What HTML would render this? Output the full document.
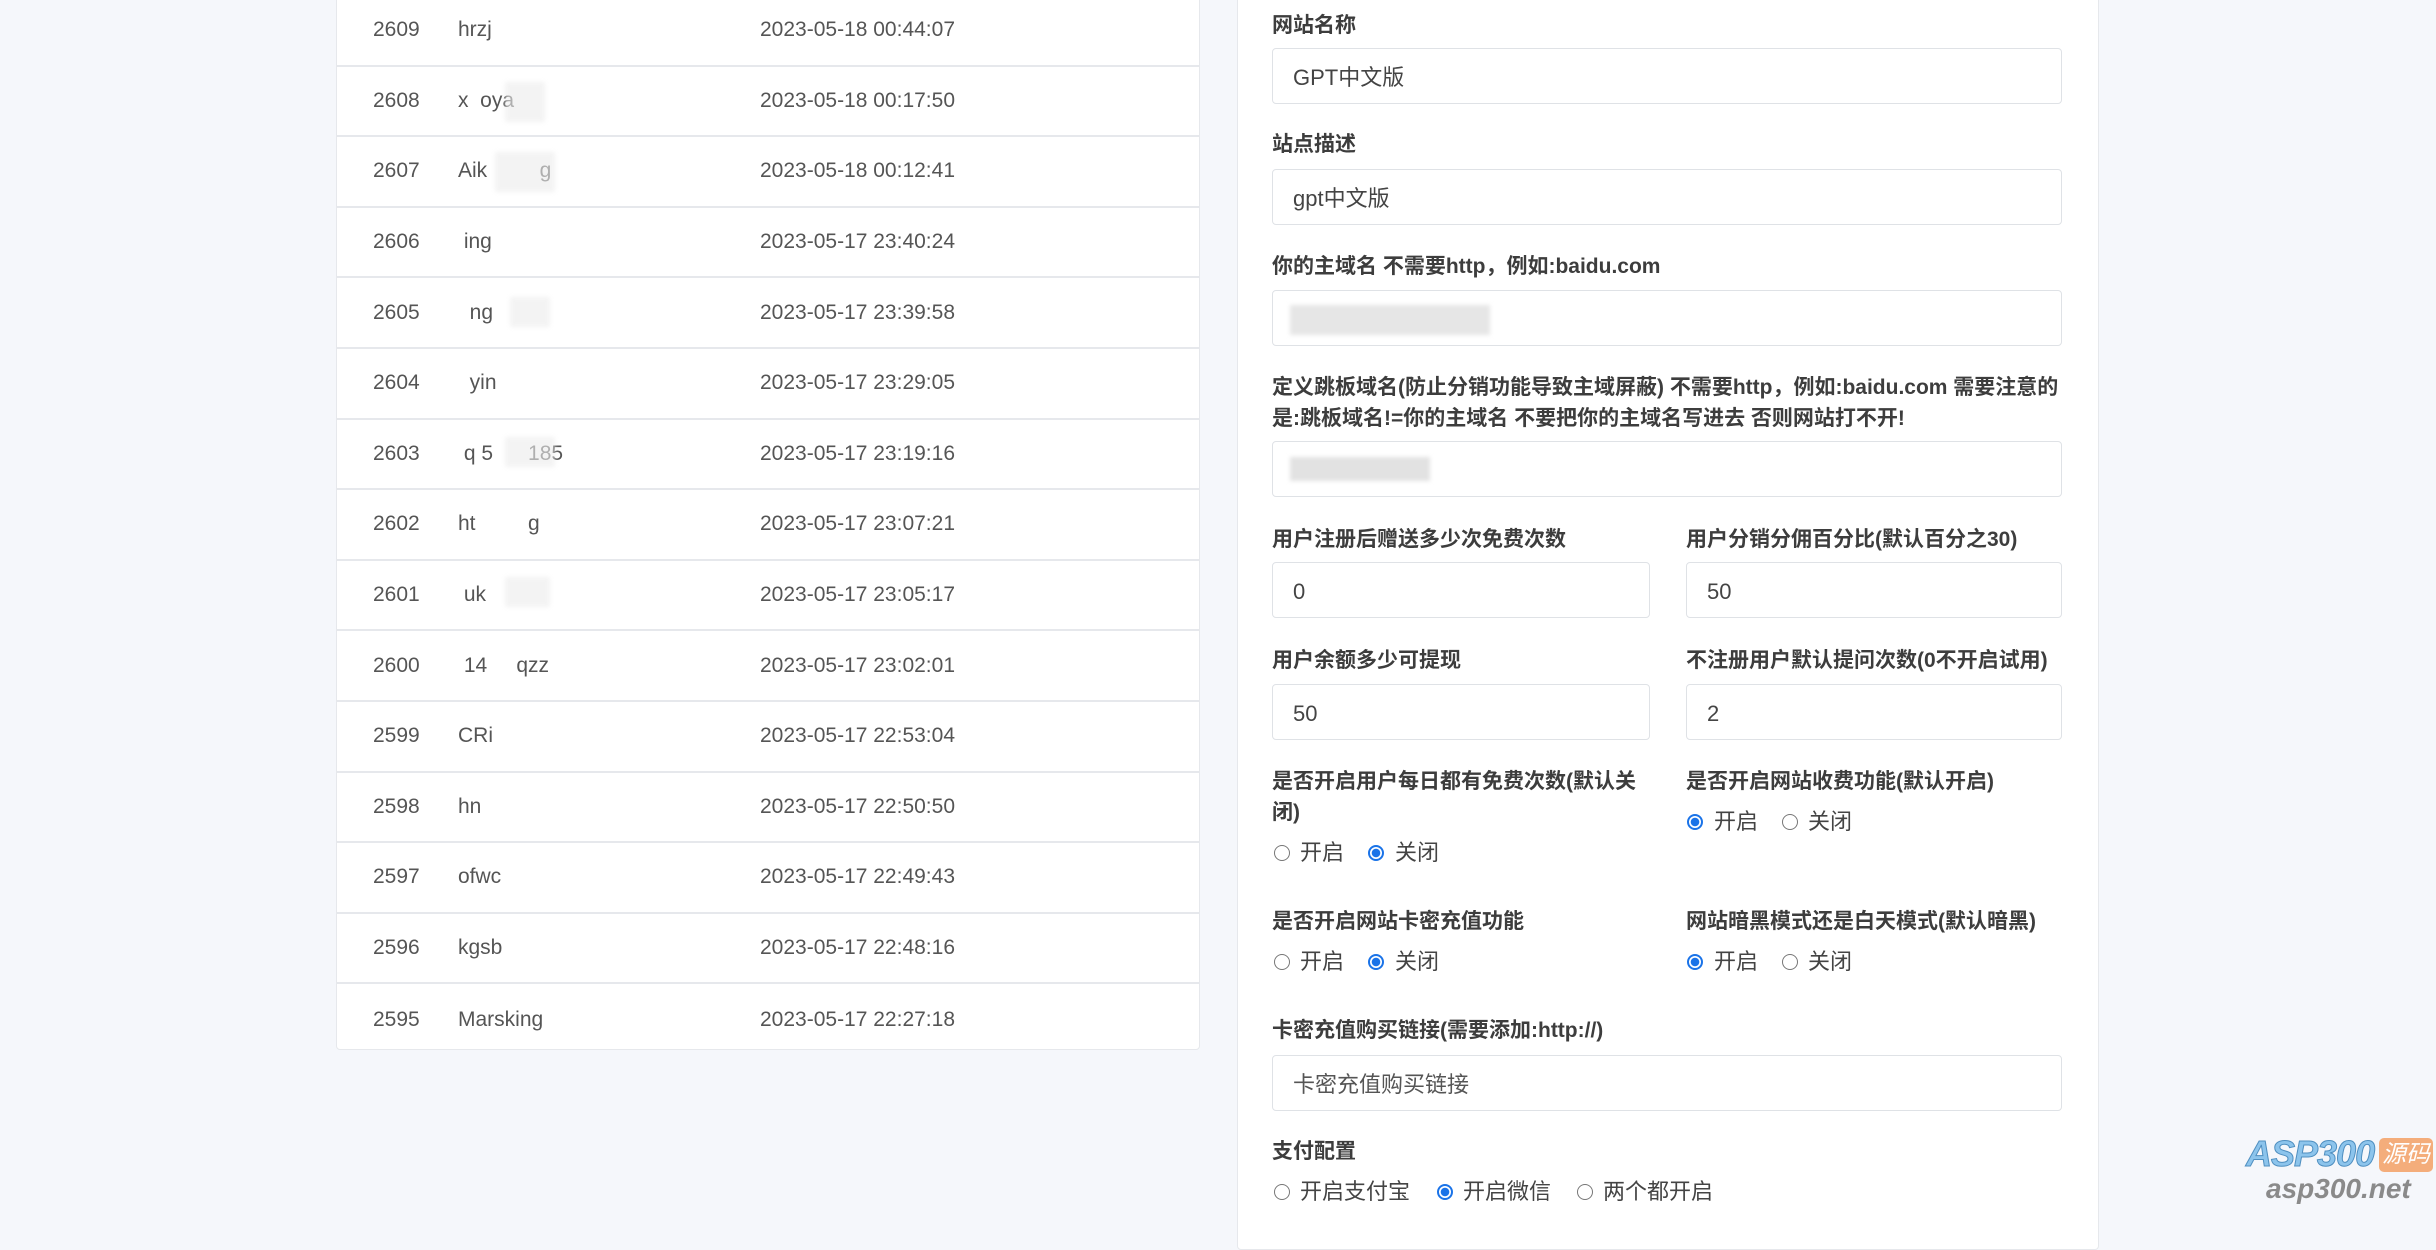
<!DOCTYPE html>
<html><head><meta charset="utf-8">
<style>
*{margin:0;padding:0;box-sizing:border-box}
body{width:2436px;height:1213px;background:#f5f7fb;position:relative;overflow:hidden;font-family:"Liberation Sans","Noto Sans CJK SC",sans-serif;color:#444}
.card{position:absolute;background:#fff;border:1px solid #e6e8ec;border-radius:4px}
.row{position:absolute;left:0;right:0;height:70.6px;border-bottom:2px solid #e6e8ec;font-size:21px;color:#555}
.row span{position:absolute;top:50%;transform:translateY(-50%);white-space:nowrap}
.blur{position:absolute;background:#ececec;filter:blur(2px)}
.lbl{position:absolute;left:1272px;font-size:21px;font-weight:bold;color:#3d3d3d;white-space:nowrap;line-height:31px}
.inp{position:absolute;height:56px;border:1px solid #dfe2e6;border-radius:4px;background:#fff;font-size:22px;color:#444;padding-left:20px;line-height:58px}
.rd{position:absolute;width:16px;height:16px;border:1.5px solid #777;border-radius:50%;background:#fff}
.rd.on{border:2px solid #1a73e8;background:radial-gradient(circle,#1a73e8 0 4px,#fff 4.5px)}
.rt{position:absolute;font-size:22px;color:#444;line-height:30px;white-space:nowrap}
</style></head><body>
<div class="card" style="left:336px;top:-10px;width:864px;height:1060px;"></div>
<div style="position:absolute;left:336px;top:-4px;width:864px;">
<div class="row" style="top:0"><span style="left:37px">2609</span><span style="left:122px">hrzj</span><span style="left:424px">2023-05-18 00:44:07</span></div>
<div class="row" style="top:70.6px"><span style="left:37px">2608</span><span style="left:122px">x&nbsp;&nbsp;oya</span><span style="left:424px">2023-05-18 00:17:50</span></div>
<div class="row" style="top:141.2px"><span style="left:37px">2607</span><span style="left:122px">Aik&nbsp;&nbsp;&nbsp;&nbsp;&nbsp;&nbsp;&nbsp;&nbsp;&nbsp;g</span><span style="left:424px">2023-05-18 00:12:41</span></div>
<div class="row" style="top:211.8px"><span style="left:37px">2606</span><span style="left:122px">&nbsp;ing</span><span style="left:424px">2023-05-17 23:40:24</span></div>
<div class="row" style="top:282.4px"><span style="left:37px">2605</span><span style="left:122px">&nbsp;&nbsp;ng</span><span style="left:424px">2023-05-17 23:39:58</span></div>
<div class="row" style="top:353px"><span style="left:37px">2604</span><span style="left:122px">&nbsp;&nbsp;yin</span><span style="left:424px">2023-05-17 23:29:05</span></div>
<div class="row" style="top:423.6px"><span style="left:37px">2603</span><span style="left:122px">&nbsp;q&nbsp;5&nbsp;&nbsp;&nbsp;&nbsp;&nbsp;&nbsp;185</span><span style="left:424px">2023-05-17 23:19:16</span></div>
<div class="row" style="top:494.2px"><span style="left:37px">2602</span><span style="left:122px">ht&nbsp;&nbsp;&nbsp;&nbsp;&nbsp;&nbsp;&nbsp;&nbsp;&nbsp;g</span><span style="left:424px">2023-05-17 23:07:21</span></div>
<div class="row" style="top:564.8px"><span style="left:37px">2601</span><span style="left:122px">&nbsp;uk</span><span style="left:424px">2023-05-17 23:05:17</span></div>
<div class="row" style="top:635.4px"><span style="left:37px">2600</span><span style="left:122px">&nbsp;14&nbsp;&nbsp;&nbsp;&nbsp;&nbsp;qzz</span><span style="left:424px">2023-05-17 23:02:01</span></div>
<div class="row" style="top:706px"><span style="left:37px">2599</span><span style="left:122px">CRi</span><span style="left:424px">2023-05-17 22:53:04</span></div>
<div class="row" style="top:776.6px"><span style="left:37px">2598</span><span style="left:122px">hn</span><span style="left:424px">2023-05-17 22:50:50</span></div>
<div class="row" style="top:847.2px"><span style="left:37px">2597</span><span style="left:122px">ofwc</span><span style="left:424px">2023-05-17 22:49:43</span></div>
<div class="row" style="top:917.8px"><span style="left:37px">2596</span><span style="left:122px">kgsb</span><span style="left:424px">2023-05-17 22:48:16</span></div>
<div class="row" style="top:988.4px;border-bottom:none"><span style="left:37px">2595</span><span style="left:122px">Marsking</span><span style="left:424px">2023-05-17 22:27:18</span></div>
</div>
<div class="blur" style="left:505px;top:82px;width:40px;height:40px;opacity:.6"></div>
<div class="blur" style="left:495px;top:152px;width:60px;height:40px;opacity:.6"></div>
<div class="blur" style="left:510px;top:297px;width:40px;height:30px;opacity:.6"></div>
<div class="blur" style="left:505px;top:437px;width:50px;height:30px;opacity:.6"></div>
<div class="blur" style="left:505px;top:577px;width:45px;height:30px;opacity:.6"></div>

<div class="card" style="left:1237px;top:-10px;width:862px;height:1260px;"></div>

<div class="lbl" style="top:10px">网站名称</div>
<div class="inp" style="left:1272px;top:48px;width:790px">GPT中文版</div>
<div class="lbl" style="top:129px">站点描述</div>
<div class="inp" style="left:1272px;top:169px;width:790px">gpt中文版</div>
<div class="lbl" style="top:251px">你的主域名 不需要http，例如:baidu.com</div>
<div class="inp" style="left:1272px;top:290px;width:790px"></div>
<div class="blur" style="left:1290px;top:305px;width:200px;height:30px;background:#e6e6e6"></div>
<div class="lbl" style="top:372px">定义跳板域名(防止分销功能导致主域屏蔽) 不需要http，例如:baidu.com 需要注意的</div>
<div class="lbl" style="top:403px">是:跳板域名!=你的主域名 不要把你的主域名写进去 否则网站打不开!</div>
<div class="inp" style="left:1272px;top:441px;width:790px"></div>
<div class="blur" style="left:1290px;top:457px;width:140px;height:24px;background:#e2e2e2"></div>

<div class="lbl" style="top:524px">用户注册后赠送多少次免费次数</div>
<div class="lbl" style="top:524px;left:1686px">用户分销分佣百分比(默认百分之30)</div>
<div class="inp" style="left:1272px;top:562px;width:378px">0</div>
<div class="inp" style="left:1686px;top:562px;width:376px">50</div>
<div class="lbl" style="top:645px">用户余额多少可提现</div>
<div class="lbl" style="top:645px;left:1686px">不注册用户默认提问次数(0不开启试用)</div>
<div class="inp" style="left:1272px;top:684px;width:378px">50</div>
<div class="inp" style="left:1686px;top:684px;width:376px">2</div>

<div class="lbl" style="top:766px">是否开启用户每日都有免费次数(默认关</div>
<div class="lbl" style="top:797px">闭)</div>
<div class="lbl" style="top:766px;left:1686px">是否开启网站收费功能(默认开启)</div>
<div class="rd" style="left:1274px;top:845px"></div><div class="rt" style="left:1300px;top:838px">开启</div>
<div class="rd on" style="left:1368px;top:845px"></div><div class="rt" style="left:1395px;top:838px">关闭</div>
<div class="rd on" style="left:1687px;top:814px"></div><div class="rt" style="left:1714px;top:807px">开启</div>
<div class="rd" style="left:1782px;top:814px"></div><div class="rt" style="left:1808px;top:807px">关闭</div>

<div class="lbl" style="top:906px">是否开启网站卡密充值功能</div>
<div class="lbl" style="top:906px;left:1686px">网站暗黑模式还是白天模式(默认暗黑)</div>
<div class="rd" style="left:1274px;top:954px"></div><div class="rt" style="left:1300px;top:947px">开启</div>
<div class="rd on" style="left:1368px;top:954px"></div><div class="rt" style="left:1395px;top:947px">关闭</div>
<div class="rd on" style="left:1687px;top:954px"></div><div class="rt" style="left:1714px;top:947px">开启</div>
<div class="rd" style="left:1782px;top:954px"></div><div class="rt" style="left:1808px;top:947px">关闭</div>

<div class="lbl" style="top:1015px">卡密充值购买链接(需要添加:http://)</div>
<div class="inp" style="left:1272px;top:1055px;width:790px;color:#555">卡密充值购买链接</div>
<div class="lbl" style="top:1136px">支付配置</div>
<div class="rd" style="left:1274px;top:1184px"></div><div class="rt" style="left:1300px;top:1177px">开启支付宝</div>
<div class="rd on" style="left:1437px;top:1184px"></div><div class="rt" style="left:1463px;top:1177px">开启微信</div>
<div class="rd" style="left:1577px;top:1184px"></div><div class="rt" style="left:1603px;top:1177px">两个都开启</div>

<div style="position:absolute;left:2246px;top:1134px;font-size:36px;font-weight:bold;font-style:italic;color:#8cc4ec;-webkit-text-stroke:1px #4f8fc0;letter-spacing:-1px;line-height:40px">ASP300</div>
<div style="position:absolute;left:2379px;top:1138px;width:54px;height:34px;background:#f4ad7b;border-radius:5px;color:#fff;font-size:24px;font-style:italic;text-align:center;line-height:34px">源码</div>
<div style="position:absolute;left:2266px;top:1174px;font-size:28px;font-weight:bold;font-style:italic;color:#8a8a8a;line-height:30px">asp300.net</div>
</body></html>
